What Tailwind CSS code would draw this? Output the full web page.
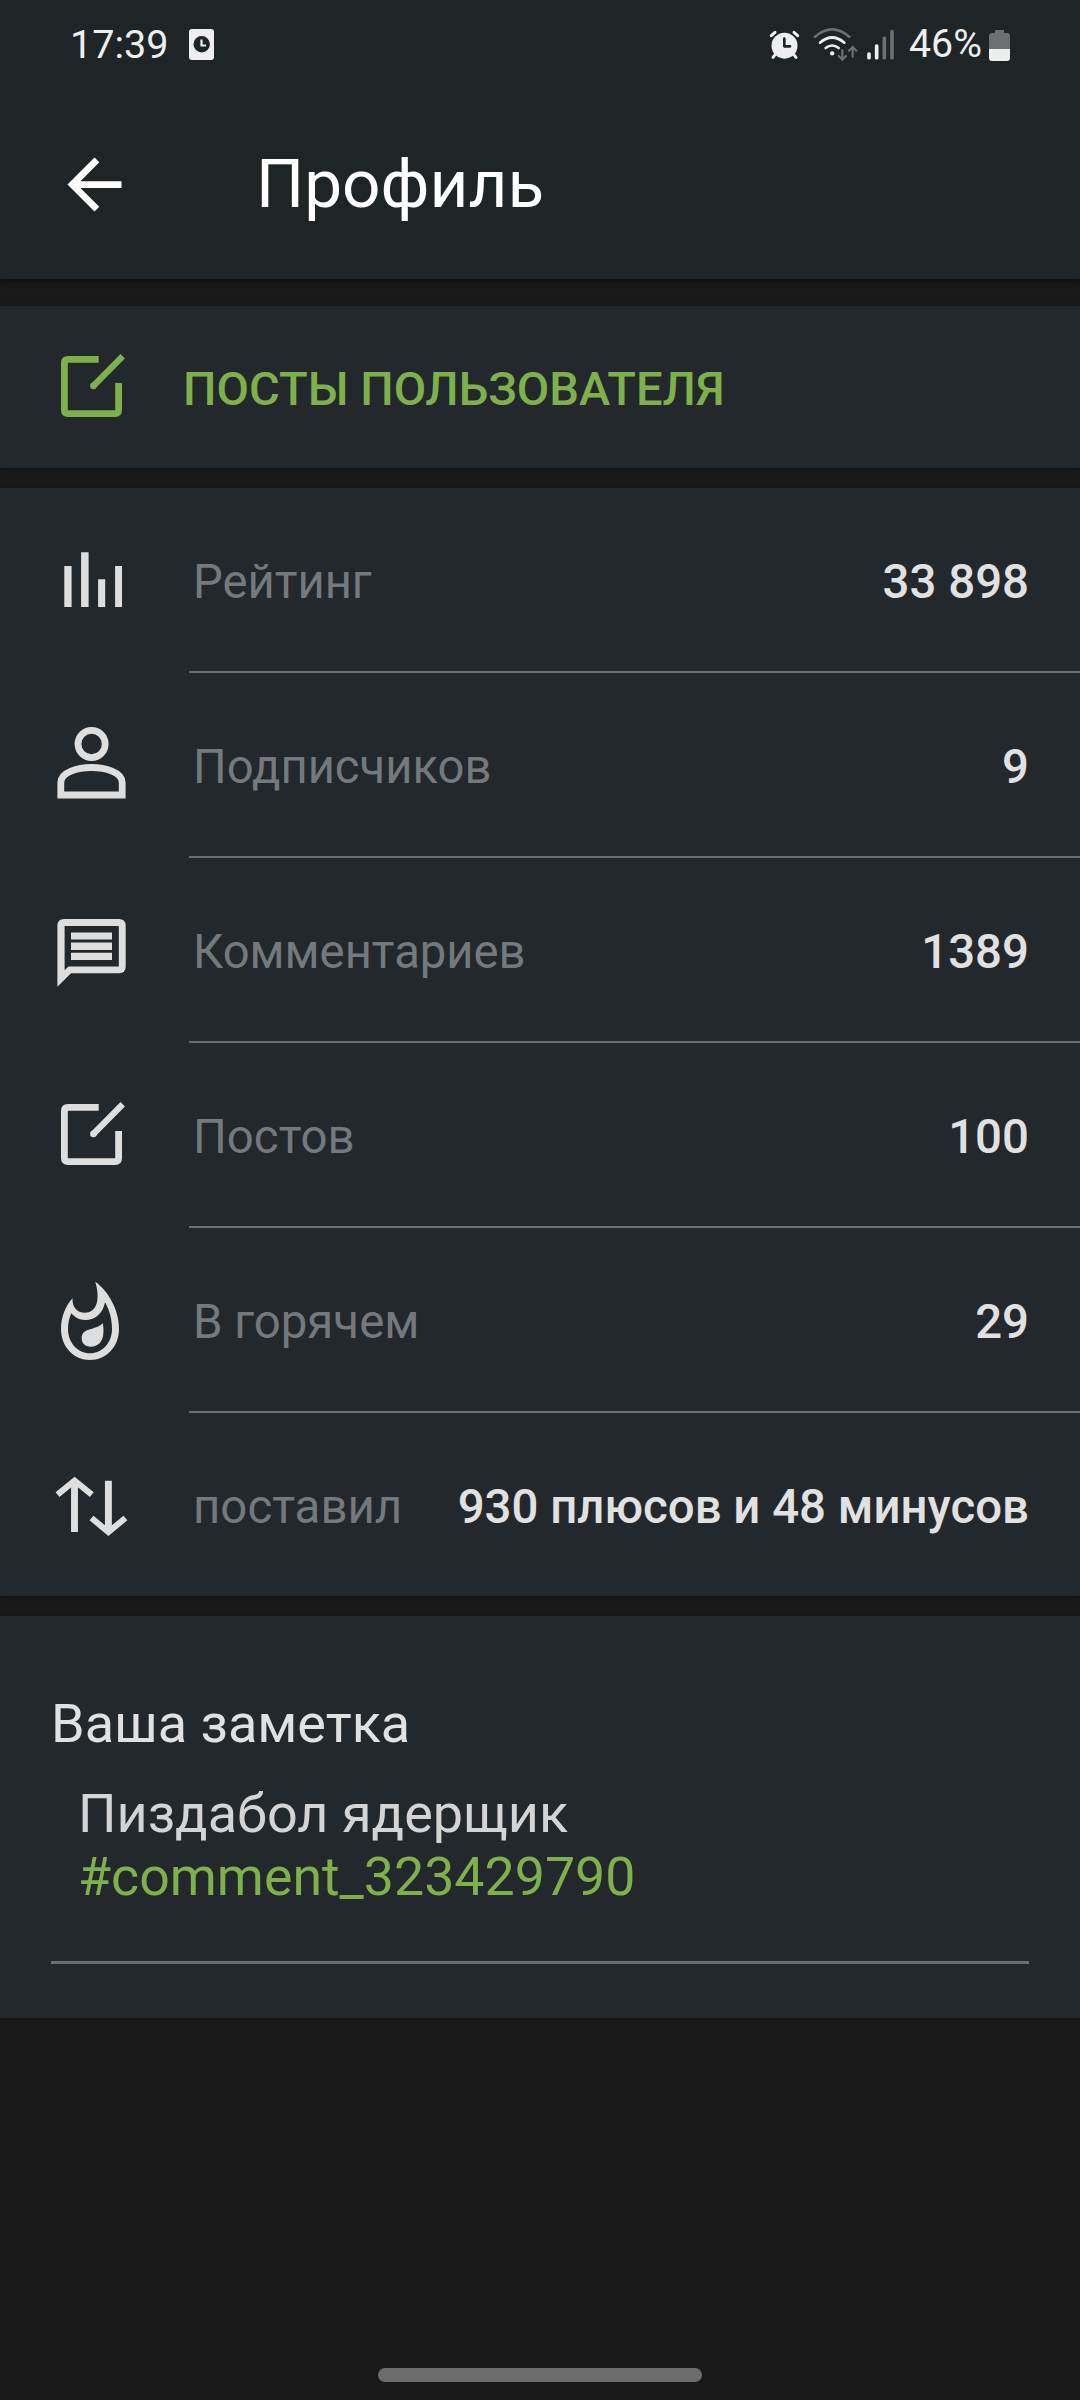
<!DOCTYPE html>
<html lang="ru">
<head>
<meta charset="utf-8">
<title>Профиль</title>
<script src="https://cdn.jsdelivr.net/npm/@tailwindcss/browser@4"></script>
</head>
<body class="w-[1080px] h-[2400px] bg-[#191919] font-[Roboto,sans-serif] text-[#e1e1e1] overflow-hidden flex flex-col">

<header class="h-[279px] shrink-0 bg-[#1f2427] shadow-[0_2px_6px_rgba(0,0,0,0.45)]">
  <div class="h-[88px] flex items-start text-[39.6px] leading-[47px] text-[#eeeeee]">
    <span class="ml-[70px] mt-[21px] w-[119px] whitespace-nowrap">17:39</span>
    <svg class="mt-[29px] w-[25px] h-[31px]" viewBox="0 0 25 31"><rect width="25" height="31" rx="3" fill="#eee"/><circle cx="12.7" cy="15.3" r="8.2" fill="#1f2427"/><path d="M12.5 10.5V16.5H17" fill="none" stroke="#eee" stroke-width="2.2"/></svg>
    <svg class="ml-auto mt-[26px] w-[33px] h-[37px]" viewBox="84 78 99 111"><g stroke="#eee" stroke-linecap="round"><path d="M94 107L105 97M173 107L162 97" stroke-width="9"/><path d="M106 163L99 172M161 163L168 172" stroke-width="9"/></g><circle cx="133.500" cy="137" r="39" fill="#eee"/><path d="M133 116V139H150" fill="none" stroke="#1f2427" stroke-width="8" stroke-linecap="round" stroke-linejoin="round"/></svg>
    <svg class="ml-[11px] mt-[26px] w-[47px] h-[37px]" viewBox="216 78 141 111" fill="none" stroke-linecap="round"><path d="M225 110Q276 66 328 110" stroke="#6c7072" stroke-width="8"/><path d="M240 128Q276 97 313 128M257 144Q276 129 296 144" stroke="#eee" stroke-width="8"/><circle cx="276.500" cy="160" r="6.500" fill="#eee"/><path d="M307 150V178M296 168L307 179L318 168M338 170V141M327 152L338 141L349 152" stroke="#6c7072" stroke-width="6.500"/></svg>
    <svg class="ml-[7px] mt-[26px] w-[30px] h-[37px]" viewBox="378 78 90 111" stroke-width="11" stroke-linecap="round"><path d="M387 162V173M410 138V173" stroke="#eee"/><path d="M433 115V173M456 95V173" stroke="#6c7072"/></svg>
    <span class="ml-[13px] mt-[21px] w-[79px] text-[39.3px] whitespace-nowrap">46%</span>
    <svg class="mr-[69px] mt-[29px] w-[23px] h-[33px]" viewBox="744 87 69 99"><path d="M765 90H792V99H801Q810 99 810 108V147H747V108Q747 99 756 99H765Z" fill="#6c7072"/><path d="M747 147H810V174Q810 183 801 183H756Q747 183 747 174Z" fill="#eee"/></svg>
  </div>
  <div class="flex items-start text-white">
    <svg class="ml-[54px] mt-[56px] w-[81px] h-[81px]" viewBox="0 0 24 24" fill="#fff"><path d="M20 11H7.830l5.590-5.590L12 4l-8 8 8 8 1.410-1.410L7.830 13H20z"/></svg>
    <h1 class="ml-[121px] mt-[57px] text-[67.5px] leading-[77px] whitespace-nowrap">Профиль</h1>
  </div>
</header>

<a class="mt-[27px] h-[162px] shrink-0 bg-[#23282c] shadow-[0_1px_4px_rgba(0,0,0,0.35)] flex items-center text-[#7eb04b]">
  <svg class="ml-[50px] mb-[1px] w-[81px] h-[81px]" viewBox="0 0 81 81" fill="none" stroke="currentColor"><path d="M48.700 13.400H18Q14.400 13.400 14.400 17V64Q14.400 67.600 18 67.600H65Q68.600 67.600 68.600 64V37" stroke-width="6.800"/><path d="M43.300 40L72.700 10.300" stroke-width="6.200"/><circle cx="43.400" cy="39.900" r="3.300" fill="currentColor" stroke="none"/></svg>
  <span class="ml-[52px] mt-[3px] text-[47.1px] leading-[56px] font-medium whitespace-nowrap">ПОСТЫ ПОЛЬЗОВАТЕЛЯ</span>
</a>

<section class="mt-[20px] h-[1108px] shrink-0 bg-[#23282c] shadow-[0_1px_4px_rgba(0,0,0,0.35)] flex flex-col text-[47.4px] leading-[56px]">
  <div class="h-[185px] shrink-0 flex">
    <svg class="ml-[50px] mt-[51px] w-[81px] h-[81px]" viewBox="0 0 81 81" fill="#dedede"><path d="M14.300 27H21.600V68H14.300ZM31.100 13.300H38.600V68H31.100ZM48.100 40.300H55.200V68H48.100ZM65.100 27H72V68H65.100Z"/></svg>
    <div class="ml-[58px] flex-1 border-b-2 border-[#6c6e6f] pl-[4px] pr-[51px] pt-[5px] flex justify-between items-center"><span class="text-[47.2px] text-[#75797b]">Рейтинг</span><span class="font-medium">33 898</span></div>
  </div>
  <div class="h-[185px] shrink-0 flex">
    <svg class="ml-[50px] mt-[51px] w-[81px] h-[81px]" viewBox="0 0 81 81" fill="none" stroke="#dedede" stroke-width="6.800"><circle cx="41.600" cy="20" r="13.600"/><path d="M10.800 71V58.500C10.800 48 28 43.500 41.500 43.500S72.200 48 72.200 58.500V71Z"/></svg>
    <div class="ml-[58px] flex-1 border-b-2 border-[#6c6e6f] pl-[4px] pr-[51px] pt-[5px] flex justify-between items-center"><span class="text-[47.2px] text-[#75797b]">Подписчиков</span><span class="font-medium">9</span></div>
  </div>
  <div class="h-[185px] shrink-0 flex">
    <svg class="ml-[50px] mt-[51px] w-[81px] h-[81px]" viewBox="0 0 81 81" fill="#dedede"><path fill-rule="evenodd" d="M14 10H69Q75.700 10 75.700 16.700V57.600Q75.700 64.300 69 64.300H21L7.400 77.700V16.700Q7.400 10 14 10ZM14.600 17V61.300L18.500 57.500H68.800V17Z"/><path d="M21 23.400H62V30.600H21ZM21 33.500H62V40.900H21ZM21 43.800H62V51H21Z"/></svg>
    <div class="ml-[58px] flex-1 border-b-2 border-[#6c6e6f] pl-[4px] pr-[51px] pt-[5px] flex justify-between items-center"><span class="text-[47.2px] text-[#75797b]">Комментариев</span><span class="font-medium">1389</span></div>
  </div>
  <div class="h-[185px] shrink-0 flex">
    <svg class="ml-[50px] mt-[51px] w-[81px] h-[81px]" viewBox="0 0 81 81" fill="none" stroke="#dedede"><path d="M48.700 13.400H18Q14.400 13.400 14.400 17V64Q14.400 67.600 18 67.600H65Q68.600 67.600 68.600 64V37" stroke-width="6.800"/><path d="M43.300 40L72.700 10.300" stroke-width="6.200"/><circle cx="43.400" cy="39.900" r="3.300" fill="#dedede" stroke="none"/></svg>
    <div class="ml-[58px] flex-1 border-b-2 border-[#6c6e6f] pl-[4px] pr-[51px] pt-[5px] flex justify-between items-center"><span class="text-[#75797b]">Постов</span><span class="font-medium">100</span></div>
  </div>
  <div class="h-[185px] shrink-0 flex">
    <svg class="ml-[50px] mt-[51px] w-[81px] h-[81px] overflow-visible" viewBox="0 0 81 81" fill="#dedede"><path fill-rule="evenodd" d="M45.300 2.700C58 12 69 30 69 50C69 68 56 81 40 81S11 68 11 50C11 38 15.500 27 22.500 19.300C22 28 27 33.700 35 33.700C47 33.700 50.500 20 45.300 2.700ZM55 23.300C53 34 46 41 35 41C29.500 41 25 38.500 21.300 34.300C19.300 39 18 44 18 50C18 64 28 74.300 40 74.300S62 64 62 50C62 40 59.500 31 55 23.300Z"/><path d="M52.700 44.300C53.500 48 53.700 51 53.300 55.500C52.500 63 47.500 67.700 41 67.700C35.500 67.700 31.700 64.500 31.700 59.500C31.700 48 45.500 52 52.700 44.300Z"/></svg>
    <div class="ml-[58px] flex-1 border-b-2 border-[#6c6e6f] pl-[4px] pr-[51px] pt-[5px] flex justify-between items-center"><span class="text-[#75797b]">В горячем</span><span class="font-medium">29</span></div>
  </div>
  <div class="h-[183px] shrink-0 flex">
    <svg class="ml-[50px] mt-[51px] w-[81px] h-[81px]" viewBox="0 0 81 81" fill="none" stroke="#dedede"><path d="M24.500 68V17M58.400 16.700V67" stroke-width="6.900"/><path d="M7.500 30.700L24.600 16.600L41.800 30.700M41.500 54L58.400 68.100L75.400 54" stroke-width="6.100"/></svg>
    <div class="ml-[58px] flex-1 pl-[4px] pr-[51px] pt-[5px] flex justify-between items-center"><span class="text-[#75797b]">поставил</span><span class="font-medium">930 плюсов и 48 минусов</span></div>
  </div>
</section>

<section class="mt-[20px] h-[402px] shrink-0 bg-[#23282c] shadow-[0_1px_4px_rgba(0,0,0,0.35)] px-[51px] pt-[76px] text-[54px] leading-[63px]">
  <h2 class="whitespace-nowrap">Ваша заметка</h2>
  <div class="mt-[27px] h-[182px] border-b-3 border-[#6c6e6f] pl-[27px]">
    <p class="text-[#d4d4d5]">Пиздабол ядерщик</p>
    <p class="text-[53.7px] text-[#7eb04b]">#comment_323429790</p>
  </div>
</section>

<div class="mt-auto mb-[18px] mx-auto w-[324px] h-[14px] shrink-0 rounded-full bg-[#6c6c6c]"></div>
</body>
</html>
